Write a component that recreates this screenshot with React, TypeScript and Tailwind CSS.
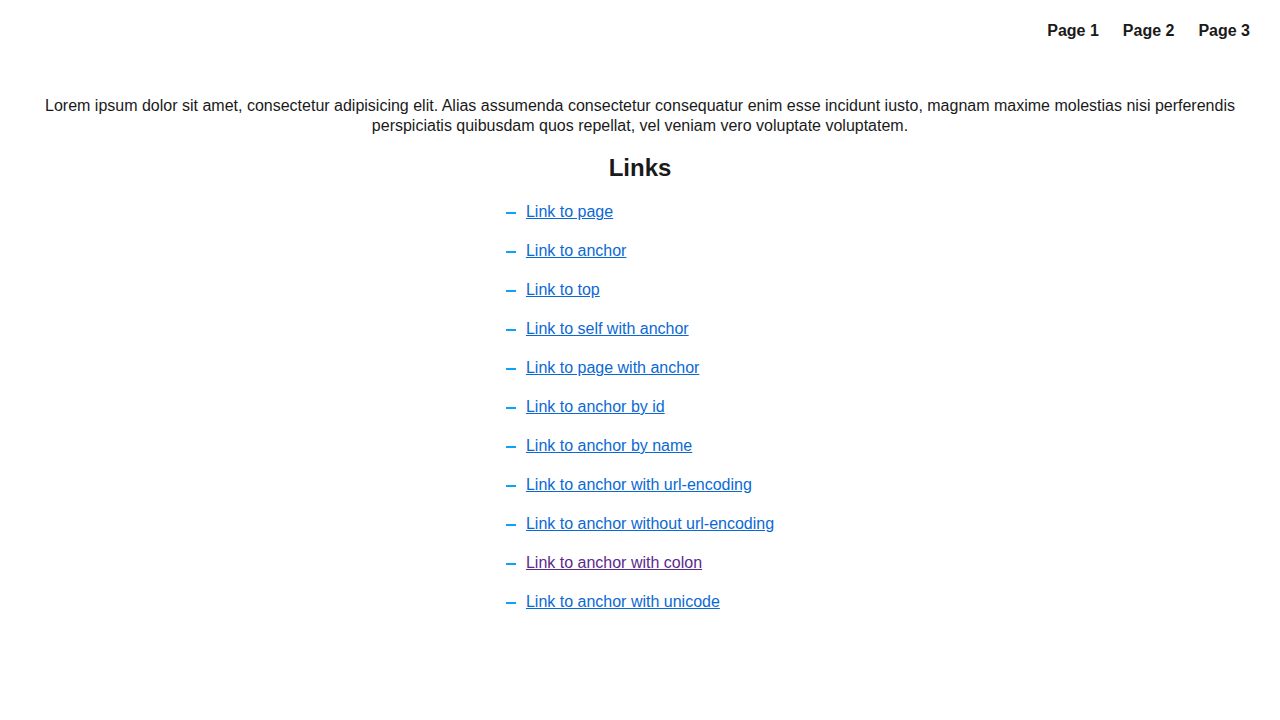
const links = [
  { label: "Link to page", visited: false },
  { label: "Link to anchor", visited: false },
  { label: "Link to top", visited: false },
  { label: "Link to self with anchor", visited: false },
  { label: "Link to page with anchor", visited: false },
  { label: "Link to anchor by id", visited: false },
  { label: "Link to anchor by name", visited: false },
  { label: "Link to anchor with url-encoding", visited: false },
  { label: "Link to anchor without url-encoding", visited: false },
  { label: "Link to anchor with colon", visited: true },
  { label: "Link to anchor with unicode", visited: false },
];

export default function App() {
  return (
    <div className="min-h-[720px] bg-white font-['Liberation_Sans',Arial,sans-serif] text-[#1a1a1a]">
      <nav className="flex justify-end gap-6 px-[30px] pt-[21px] text-base font-bold leading-5">
        <a href="#">Page 1</a>
        <a href="#">Page 2</a>
        <a href="#">Page 3</a>
      </nav>
      <main className="px-10 pt-[55px] text-center">
        <p className="text-base leading-5">
          Lorem ipsum dolor sit amet, consectetur adipisicing elit. Alias assumenda consectetur consequatur enim esse
          incidunt iusto, magnam maxime molestias nisi perferendis perspiciatis quibusdam quos repellat, vel veniam vero
          voluptate voluptatem.
        </p>
        <h2 className="mt-[18px] text-2xl leading-7 font-bold">Links</h2>
        <ul className="mt-[20px] inline-flex flex-col gap-[19px] text-left">
          {links.map((link) => (
            <li key={link.label} className="flex items-center gap-[10px] leading-5">
              <span className="mt-[2px] h-[2px] w-[10px] bg-[#0aa3f5]" />
              <a
                href="#"
                className={link.visited ? "text-[#5b2a8e] underline" : "text-[#0b69d4] underline"}
              >
                {link.label}
              </a>
            </li>
          ))}
        </ul>
      </main>
    </div>
  );
}
